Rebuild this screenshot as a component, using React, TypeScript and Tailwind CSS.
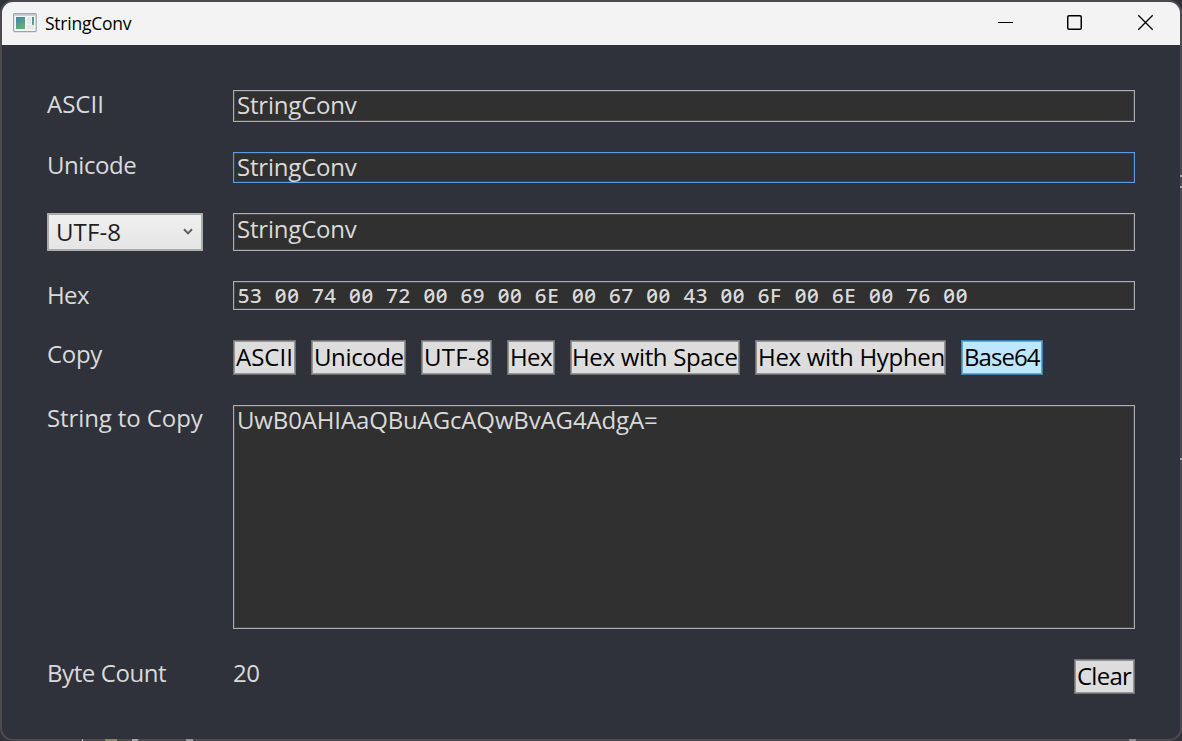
import type { ReactNode } from "react";

const bytes = "53 00 74 00 72 00 69 00 6E 00 67 00 43 00 6F 00 6E 00 76 00".split(" ");

function Field({ className, children }: { className: string; children: ReactNode }) {
  return (
    <div className={`w-[902px] whitespace-nowrap border bg-[#303030] pl-[3px] ${className}`}>
      {children}
    </div>
  );
}

const normalBorder = "border-[#abadb3] shadow-[inset_1px_1px_0_#46474b,inset_-1px_-1px_0_#46474b]";

function Button({ className, active, children }: { className: string; active?: boolean; children: ReactNode }) {
  const tone = active
    ? "border-[#3c7fb1] bg-[#bee6fd] shadow-[inset_0_0_0_1px_#6aa6cd]"
    : "border-[#707070] bg-[#dddddd] shadow-[inset_0_0_0_1px_#959595]";
  return (
    <button type="button" className={`flex h-[35px] items-start whitespace-nowrap border text-left leading-[31px] text-black ${tone} ${className}`}>
      {children}
    </button>
  );
}

function AppIcon() {
  return (
    <svg width="24" height="20" viewBox="0 0 24 20">
      <defs>
        <linearGradient id="pane" x1="0" y1="0" x2="0.4" y2="1">
          <stop offset="0" stopColor="#4684a9" />
          <stop offset="1" stopColor="#62ae75" />
        </linearGradient>
      </defs>
      <rect x="0.6" y="0.6" width="22.6" height="18" rx="1" fill="#f4f5f6" stroke="#9fa4aa" strokeWidth="1.2" />
      <rect x="1.2" y="1" width="21.4" height="1.8" fill="#bfc7d1" />
      <rect x="3" y="4" width="9" height="12" fill="url(#pane)" />
      <rect x="14" y="4" width="4" height="7" fill="#e5e7e8" />
      <rect x="14" y="12" width="7" height="4" fill="#e5e7e8" />
      <rect x="19" y="4" width="2" height="8" fill="url(#pane)" />
    </svg>
  );
}

function TitleBar() {
  return (
    <header className="flex h-[43px] items-center bg-[#f3f3f3] pb-[2px] pl-[11px] pr-[26px] text-black">
      <AppIcon />
      <h1 className="ml-2 grow text-[17.5px] leading-6 tracking-[-0.25px]">StringConv</h1>
      <div className="flex items-center">
        <svg className="mr-[52px]" width="17" height="17" viewBox="0 0 17 17" stroke="#000" fill="none">
          <path d="M1 8.5H16" />
        </svg>
        <svg className="mr-[54px]" width="17" height="17" viewBox="0 0 17 17" stroke="#000" fill="none" strokeWidth="1.5">
          <rect x="1.75" y="1.75" width="13.5" height="13.5" rx="1.3" />
        </svg>
        <svg width="17" height="17" viewBox="0 0 17 17" stroke="#000" fill="none" strokeWidth="1.3">
          <path d="M1.3 1.3L15.7 15.7M15.7 1.3L1.3 15.7" />
        </svg>
      </div>
    </header>
  );
}

export default function App() {
  return (
    <div className="relative h-[741px] w-[1182px] overflow-hidden bg-[#30323a] font-['Open_Sans',sans-serif] text-[24px]">
      <main className="flex h-[741px] flex-col overflow-hidden rounded-[13px] border-2 border-[#4a4a4f] bg-[#2f323b] text-[#dadada]">
        <TitleBar />
        <div className="grid grid-cols-[186px_902px] grid-rows-[32px_31px_38px_29px_35px_224px_35px] gap-y-[30px] pl-[45px] pt-[45px]">
          <span className="leading-[28px]">ASCII</span>
          <Field className={`leading-[28px] tracking-[-0.2px] ${normalBorder}`}>StringConv</Field>

          <span className="leading-[26px] tracking-[-0.45px]">Unicode</span>
          <Field className="border-[#569de5] leading-[28px] tracking-[-0.2px] shadow-[inset_1px_1px_0_#34414f,inset_-1px_-1px_0_#34414f]">
            StringConv
          </Field>

          <div className="flex h-[38px] w-[156px] items-center justify-between border-2 border-[#acacac] bg-linear-to-b from-[#f0f0f0] to-[#e5e5e5] pl-[7px] pr-[8px] text-[#1f1f1f]">
            <span className="leading-[34px] tracking-[0.1px]">UTF-8</span>
            <svg className="mb-px" width="10" height="8" viewBox="0 0 10 8" fill="none" stroke="#606060" strokeWidth="2">
              <path d="M1 1.2L5 5.4L9 1.2" />
            </svg>
          </div>
          <Field className={`leading-[30px] tracking-[-0.2px] ${normalBorder}`}>StringConv</Field>

          <span className="leading-[28px] tracking-[-0.6px]">Hex</span>
          <Field className={`font-['Noto_Sans',sans-serif] text-[20.5px] font-medium leading-[27px] slashed-zero tracking-[0.6px] ${normalBorder}`}>
            {bytes.map((b, i) => (
              <span key={i} className="inline-block w-[37.15px] whitespace-pre pl-[0.7px]">
                {b + " "}
              </span>
            ))}
          </Field>

          <span className="leading-[28px] tracking-[-0.3px]">Copy</span>
          <div className="flex gap-[15px]">
            <Button className="w-[63px] pl-[2px]">ASCII</Button>
            <Button className="w-[95px] pl-[2px] tracking-[-0.38px]">Unicode</Button>
            <Button className="w-[71px] pl-[2px] tracking-[0.3px]">UTF-8</Button>
            <Button className="w-[48px] pl-[2px] tracking-[-0.6px]">Hex</Button>
            <Button className="w-[170px] pl-[1px] tracking-[-0.33px]">Hex with Space</Button>
            <Button className="w-[191px] pl-[2px] tracking-[-0.3px]">Hex with Hyphen</Button>
            <Button active className="w-[82px] pl-[2px] tracking-[-0.95px]">Base64</Button>
          </div>

          <span className="leading-[26px] tracking-[-0.1px]">String to Copy</span>
          <Field className={`leading-[28px] tracking-[-0.14px] ${normalBorder}`}>UwB0AHIAaQBuAGcAQwBvAG4AdgA=</Field>

          <span className="leading-[28px] tracking-[-0.42px]">Byte Count</span>
          <div className="flex justify-between">
            <span className="leading-[28px] tracking-[-0.4px]">20</span>
            <Button className="w-[61px] pl-[2px] tracking-[-0.75px]">Clear</Button>
          </div>
        </div>
      </main>
      <i className="absolute bottom-0 left-[82px] h-[2px] w-px bg-[#b8b8b8]" />
      <i className="absolute bottom-0 left-[105px] h-[2px] w-3 bg-[#8d8561]" />
      <i className="absolute bottom-0 left-[132px] h-[2px] w-[6px] bg-[#a5a5a5]" />
      <i className="absolute bottom-0 left-[186px] h-[2px] w-[7px] bg-[#97979a]" />
      <i className="absolute bottom-0 left-[1129px] h-[2px] w-[7px] bg-[#8a8a8e]" />
      <i className="absolute right-0 top-[175px] h-[2px] w-[2px] bg-[#a0a0a4]" />
      <i className="absolute right-0 top-[186px] h-[2px] w-[2px] bg-[#a0a0a4]" />
      <i className="absolute right-0 top-[458px] h-[2px] w-[2px] bg-[#a0a0a4]" />
    </div>
  );
}
